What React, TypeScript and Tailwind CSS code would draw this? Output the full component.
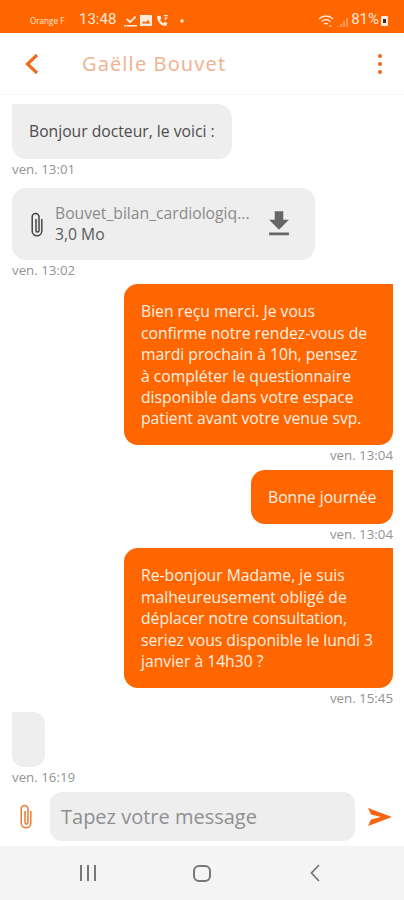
const font = "font-['Open_Sans',sans-serif]";

function Stamp({ text, right }: { text: string; right?: boolean }) {
  return (
    <div
      className={`h-[20px] pt-[1px] text-[13.300px] leading-[18px] text-[#939393] ${right ? "text-right" : ""}`}
    >
      {text}
    </div>
  );
}

function Clip({ className }: { className: string }) {
  return (
    <svg viewBox="0 0 14 25" className={className} fill="none" stroke="currentColor" strokeWidth="1.500">
      <path d="M11.800 7v12a4.800 4.800 0 0 1-9.600 0V5a3.400 3.400 0 0 1 6.800 0v13.500a1.500 1.500 0 0 1-3 0V7" />
    </svg>
  );
}

function Sent({ lines, width, height }: { lines: string[]; width: string; height: string }) {
  return (
    <div className={`ml-auto flex flex-col justify-center rounded-[14px] rounded-tr-none bg-[#ff6600] pl-[17px] pt-[2px] text-[15.700px] leading-[21.400px] text-[#fff0e4] ${width} ${height}`}>
      {lines.map((l) => (
        <div key={l} className="whitespace-nowrap">{l}</div>
      ))}
    </div>
  );
}

export default function App() {
  return (
    <div className={`flex h-[900px] w-[404px] flex-col overflow-hidden bg-white ${font}`}>
      {/* status bar */}
      <div className="flex h-[33px] items-end bg-[#ff6600] pb-[5px] pl-[30px] pr-[16px] text-[#ffe9da]">
        <span className="w-[49px] origin-left scale-x-90 text-[9px] leading-[14px]">Orange F</span>
        <span className="font-['Roboto',sans-serif] text-[15px] leading-[17px]">13:48</span>
        <svg viewBox="0 0 62 14" className="ml-[8px] h-[14px] w-[62px]" fill="currentColor">
          <path d="M2 5.500l1.300-1.300L6 6.800 11 2l1.300 1.300L6 9.500zM0 11h13v1.500H0z" />
          <path fillRule="evenodd" d="M16 1h12v11H16zM17.500 9.500h9L24 6l-2.500 2.500L20 7z" />
          <path d="M33 2c0 6 4 10 9 10l1.500-3-3-1.200-1 1.500c-1.500-.8-2.800-2-3.500-3.500l1.500-1-1-3zM40 1l4 0 0 1.300-4 0zM40.500 3.500L44 3.500 41 6.500z" />
          <circle cx="58" cy="7" r="1.700" />
        </svg>
        <div className="ml-auto flex items-end">
          <svg viewBox="0 0 30 14" className="h-[14px] w-[30px]" fill="none" stroke="currentColor" strokeWidth="1.300">
            <path d="M1 5c4-4 10-4 14 0M3.500 7.500c3-2.500 6-2.500 9 0M6 10c1.500-1 2.500-1 4 0" />
            <path d="M11 12h3M20 12v1M23 10v3M26 7v6M29 4v9" opacity=".6" />
          </svg>
          <span className="ml-[3px] font-['Roboto',sans-serif] text-[15px] leading-[17px]">81%</span>
          <span className="relative mb-[2px] ml-[2px] h-[10px] w-[7px] rounded-[1px] bg-[#ffe9da]">
            <span className="absolute left-[2px] top-[3px] h-[4px] w-[3px] bg-[#333]" />
          </span>
        </div>
      </div>

      {/* header */}
      <div className="flex h-[62px] items-center border-b border-[#f5f5f5] pl-[24px] pr-[22px]">
        <svg viewBox="0 0 16 24" className="h-[24px] w-[16px]" fill="none" stroke="#f26a1e" strokeWidth="3.200">
          <path d="M13 3L3.500 12 13 21" />
        </svg>
        <span className="ml-[42px] font-['Noto_Sans',sans-serif] text-[20px] tracking-[1.100px] text-[#f0b493]">
          Gaëlle Bouvet
        </span>
        <div className="ml-auto flex flex-col gap-[4px]">
          <span className="h-[4px] w-[4px] rounded-full bg-[#f0651c]" />
          <span className="h-[4px] w-[4px] rounded-full bg-[#f0651c]" />
          <span className="h-[4px] w-[4px] rounded-full bg-[#f0651c]" />
        </div>
      </div>

      {/* messages */}
      <div className="flex flex-1 flex-col px-[11px] pt-[9px]">
        <div className="ml-[1px] flex h-[55px] w-[220px] items-center rounded-[14px] rounded-tl-none bg-[#eeeeef] pl-[17px] text-[15.700px] text-[#4c4c4c]">
          Bonjour docteur, le voici :
        </div>
        <div className="ml-[1px] mb-[9px]"><Stamp text="ven. 13:01" /></div>

        <div className="ml-[1px] flex h-[72px] w-[303px] items-center rounded-[14px] bg-[#eeeeef] pl-[18px] pr-[19px]">
          <Clip className="h-[25px] w-[14px] shrink-0 text-[#444]" />
          <div className="ml-[11px] min-w-0 flex-1 whitespace-nowrap text-[15.700px] leading-[21px]">
            <div className="text-[#8a8a8a]">Bouvet_bilan_cardiologiq...</div>
            <div className="text-[#5a5a5a]">3,0 Mo</div>
          </div>
          <svg viewBox="0 0 24 24" className="h-[34px] w-[34px] shrink-0" fill="#666">
            <path d="M19 9h-4V3H9v6H5l7 7 7-7zM5 18v2h14v-2H5z" />
          </svg>
        </div>
        <div className="ml-[1px] mb-[4px]"><Stamp text="ven. 13:02" /></div>

        <Sent
          width="w-[269px]"
          height="h-[161px]"
          lines={[
            "Bien reçu merci. Je vous",
            "confirme notre rendez-vous de",
            "mardi prochain à 10h, pensez",
            "à compléter le questionnaire",
            "disponible dans votre espace",
            "patient avant votre venue svp.",
          ]}
        />
        <div className="mb-[5px]"><Stamp text="ven. 13:04" right /></div>

        <Sent width="w-[142px]" height="h-[54px]" lines={["Bonne journée"]} />
        <div className="mb-[4px]"><Stamp text="ven. 13:04" right /></div>

        <Sent
          width="w-[269px]"
          height="h-[140px]"
          lines={[
            "Re-bonjour Madame, je suis",
            "malheureusement obligé de",
            "déplacer notre consultation,",
            "seriez vous disponible le lundi 3",
            "janvier à 14h30 ?",
          ]}
        />
        <div className="mb-[4px]"><Stamp text="ven. 15:45" right /></div>

        <div className="ml-[1px] h-[55px] w-[33px] rounded-[12px] rounded-tl-none bg-[#eeeeef]" />
        <div className="ml-[1px]"><Stamp text="ven. 16:19" /></div>
      </div>

      {/* input */}
      <div className="flex h-[49px] items-center pl-[19px] pr-[12px]">
        <Clip className="h-[25px] w-[14px] shrink-0 text-[#f07a30]" />
        <div className="ml-[17px] flex h-[49px] w-[305px] items-center rounded-[12px] bg-[#eeeeef] pl-[11px] text-[20px] text-[#8f8f8f]">
          Tapez votre message
        </div>
        <svg viewBox="0 0 24 18" className="ml-auto h-[20px] w-[24px]" fill="#f9640f">
          <path d="M0 0l24 9L0 18l3-6.500L13 9 3 6.500z" />
        </svg>
      </div>

      {/* nav bar */}
      <div className="mt-[5px] flex h-[54px] items-center justify-between bg-[#f4f4f4] pl-[80px] pr-[84px]">
        <div className="flex gap-[5px]">
          <span className="h-[16px] w-[2px] bg-[#777]" />
          <span className="h-[16px] w-[2px] bg-[#777]" />
          <span className="h-[16px] w-[2px] bg-[#777]" />
        </div>
        <span className="mr-[2px] h-[17px] w-[18px] rounded-[6px] border-2 border-[#777]" />
        <svg viewBox="0 0 10 18" className="h-[18px] w-[10px]" fill="none" stroke="#777" strokeWidth="1.800">
          <path d="M9 1L1.500 9 9 17" />
        </svg>
      </div>
    </div>
  );
}
